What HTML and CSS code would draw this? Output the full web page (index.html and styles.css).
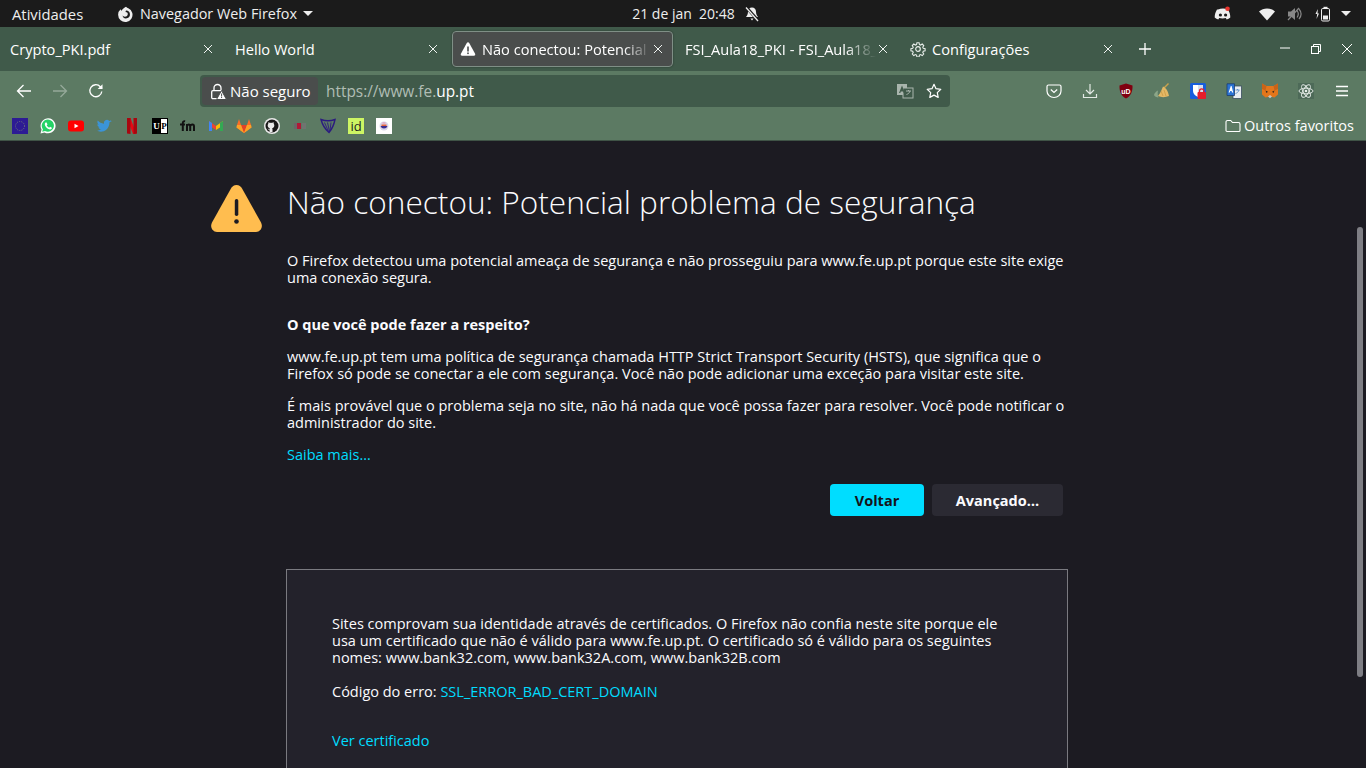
FILE: index.html
```html
<!DOCTYPE html>
<html lang="pt-BR">
<head>
    <meta charset="UTF-8">
    <meta name="viewport" content="width=device-width, initial-scale=1.0">
    <title>Não conectou: Potencial problema de segurança</title>
    <link rel="stylesheet" href="styles.css">
</head>
<body>
    <!-- GNOME top bar -->
    <header class="topbar">
        <div class="topbar-left">
            <span class="activities">Atividades</span>
            <span class="app-menu">
                <svg class="app-logo" width="16" height="16" viewBox="0 0 16 16"><path d="M8 .8c.8.8 1.500 1.200 2.300 1.400A7.200 7.200 0 1 1 2.600 3.300C2.800 4 3 4.500 3.500 4.800 4.500 3 6.200 1.800 8 .8z" fill="#eee"/><path d="M8 4.600a3.900 3.900 0 1 1-3.700 5c.6.700 1.500 1.100 2.500 1.100 1.800 0 3-1.200 3-2.700 0-1.100-.8-1.800-2.300-1.900.1-.6.300-1 .5-1.500z" fill="#1b1b1b"/></svg>
                Navegador Web Firefox
                <i class="caret"></i>
            </span>
        </div>
        <div class="topbar-center">
            <span>21 de jan&nbsp; 20:48</span>
            <svg width="16" height="16" viewBox="0 0 16 16"><path d="M8 1.500c-2.500 0-4 1.800-4 4.200 0 3-1.500 4.500-2 5.300h12c-.5-.8-2-2.300-2-5.300 0-2.400-1.500-4.200-4-4.200zM6.500 12.500h3L8 14.500z" fill="#eee"/><path d="M2.500 1.500L14.500 15" stroke="#1b1b1b" stroke-width="3"/><path d="M2 1.500L14 15" stroke="#eee" stroke-width="1.300"/></svg>
        </div>
        <div class="topbar-right">
            <span class="tray-item discord">
                <svg width="18" height="16" viewBox="0 0 18 16"><path d="M4 3.500c3-1.200 7-1.200 10 0 1.500 2.500 2.300 5 2.300 8-1 1-2.300 1.600-3.600 2l-.9-1.500c-2 .6-4.600.6-6.600 0l-.9 1.500c-1.300-.4-2.600-1-3.600-2 0-3 .8-5.500 2.300-8z" fill="#eee"/><circle cx="6.400" cy="9" r="1.600" fill="#1b1b1b"/><circle cx="11.600" cy="9" r="1.600" fill="#1b1b1b"/><circle cx="13.500" cy="2.800" r="2.300" fill="#e8352e"/></svg>
            </span>
            <span class="tray-item wifi">
                <svg width="16" height="14" viewBox="0 0 16 14"><path d="M0 4.500C4.500.5 11.500.5 16 4.500L8 13.500z" fill="#eee"/></svg>
            </span>
            <span class="tray-item vol">
                <svg width="16" height="16" viewBox="0 0 16 16"><path d="M1 5.500h3L8 2v12L4 10.500H1z" fill="#888"/><path d="M10 4.500c1.500 2 1.500 5 0 7M12 3c2.500 3 2.500 7 0 10" fill="none" stroke="#888" stroke-width="1.200"/><path d="M1 14L12 2" stroke="#888" stroke-width="1.200"/></svg>
            </span>
            <span class="tray-item battery">
                <svg width="16" height="16" viewBox="0 0 16 16"><path d="M2.800 3L.5 8h1.700L1.500 13l2.500-5.500H2.500z" fill="#eee"/><rect x="6.500" y="2.500" width="8" height="12.500" rx="1.300" fill="none" stroke="#eee"/><rect x="8.500" y=".8" width="4" height="1.700" fill="#eee"/><rect x="8" y="9.500" width="5" height="4" fill="#eee"/></svg>
            </span>
            <i class="caret"></i>
        </div>
    </header>

    <!-- tabs -->
    <nav class="tabbar">
        <div class="tab">
            <span class="tab-title">Crypto_PKI.pdf</span>
            <svg class="tab-close" viewBox="0 0 10 10"><path d="M1 1l8 8M9 1L1 9"/></svg>
        </div>
        <div class="tab">
            <span class="tab-title">Hello World</span>
            <svg class="tab-close" viewBox="0 0 10 10"><path d="M1 1l8 8M9 1L1 9"/></svg>
        </div>
        <div class="tab tab-active">
            <svg class="tab-icon" width="16" height="16" viewBox="0 0 16 16"><path d="M8 1.200c-.5 0-.9.300-1.200.8L.9 12.800c-.5 1 .1 2 1.200 2h11.800c1.100 0 1.700-1 1.200-2L9.200 2c-.3-.5-.7-.8-1.200-.8z" fill="#fff"/><rect x="7.200" y="5.500" width="1.600" height="5" fill="#4a4d4c"/><rect x="7.200" y="11.500" width="1.600" height="1.600" fill="#4a4d4c"/></svg>
            <span class="tab-title fade">Não conectou: Potencial p</span>
            <svg class="tab-close" viewBox="0 0 10 10"><path d="M1 1l8 8M9 1L1 9"/></svg>
        </div>
        <div class="tab">
            <span class="tab-title fade">FSI_Aula18_PKI - FSI_Aula18_</span>
            <svg class="tab-close" viewBox="0 0 10 10"><path d="M1 1l8 8M9 1L1 9"/></svg>
        </div>
        <div class="tab">
            <svg class="tab-icon" width="16" height="16" viewBox="0 0 16 16" fill="none" stroke="#e8eeea" stroke-width="1.200"><path d="M6.800 1h2.400l.4 2 1.300.6 1.800-1.100 1.700 1.700-1.100 1.800.6 1.300 2 .4v2.400l-2 .4-.6 1.300 1.100 1.800-1.700 1.700-1.800-1.100-1.300.6-.4 2H6.800l-.4-2-1.300-.6-1.800 1.100-1.700-1.700 1.100-1.800-.6-1.300-2-.4V7.700l2-.4.6-1.300-1.100-1.800 1.700-1.700 1.800 1.100 1.300-.6z" transform="translate(.8 .8) scale(.9)"/><circle cx="8" cy="8" r="2.300"/></svg>
            <span class="tab-title">Configurações</span>
            <svg class="tab-close" viewBox="0 0 10 10"><path d="M1 1l8 8M9 1L1 9"/></svg>
        </div>
        <svg class="new-tab" width="14" height="14" viewBox="0 0 14 14"><path d="M7 1v12M1 7h12" stroke="#fff" stroke-width="1.300"/></svg>
        <div class="win-controls">
            <svg width="12" height="12" viewBox="0 0 12 12"><path d="M1 5h10" stroke="#fff" stroke-width="1"/></svg>
            <svg width="12" height="12" viewBox="0 0 12 12" fill="none" stroke="#fff"><rect x="1.500" y="3.500" width="7" height="7"/><path d="M3.500 3.500v-2h7v7h-2"/></svg>
            <svg width="12" height="12" viewBox="0 0 12 12"><path d="M1 1l10 10M11 1L1 11" stroke="#fff" stroke-width="1"/></svg>
        </div>
    </nav>

    <!-- navigation toolbar -->
    <div class="toolbar">
        <div class="nav-buttons">
            <svg width="16" height="16" viewBox="0 0 16 16" fill="none" stroke="#fff" stroke-width="1.300"><path d="M15 8H1.500M7.500 2L1.500 8l6 6"/></svg>
            <svg class="disabled" width="16" height="16" viewBox="0 0 16 16" fill="none" stroke="#fff" stroke-width="1.300"><path d="M1 8h13.500M8.500 2l6 6-6 6"/></svg>
            <svg width="16" height="16" viewBox="0 0 16 16" fill="none" stroke="#fff" stroke-width="1.300"><path d="M13.800 8.500a6 6 0 1 1-1.500-4.800L14 5.500"/><path d="M14.500 1.200v4.800H9.700z" fill="#fff" stroke="none"/></svg>
        </div>
        <div class="urlbar">
            <div class="identity">
                <svg width="17" height="17" viewBox="0 0 17 17"><path d="M4 8V5a3.500 3.500 0 0 1 7 0v3" fill="none" stroke="#fff" stroke-width="1.300"/><rect x="1.700" y="7.700" width="10" height="8" rx="1.200" fill="none" stroke="#fff" stroke-width="1.300"/><path d="M11.500 7.500l5 9h-10z" fill="#fff" stroke="#4a4d4c"/><rect x="11.100" y="10.500" width="1" height="3" fill="#4a4d4c"/><rect x="11.100" y="14" width="1" height="1" fill="#4a4d4c"/></svg>
                <span>Não seguro</span>
            </div>
            <div class="url"><span class="url-dim">https://www.fe.</span>up.pt</div>
            <svg class="url-icon" width="18" height="16" viewBox="0 0 18 16"><rect x="1" y="1" width="10" height="11" fill="#a9b5ad"/><rect x="7" y="5" width="10" height="10" fill="#405a4a" stroke="#a9b5ad"/><path d="M6 2.500L3 10h1.300l.5-1.500h2.400l.5 1.500H9z" fill="#405a4a"/><path d="M10 8h5M12.500 7v1M14 8c-.5 2-2 3-3.500 3.500" fill="none" stroke="#a9b5ad"/></svg>
            <svg class="url-icon star" width="16" height="16" viewBox="0 0 16 16"><path d="M8 1.300l2 4.400 4.800.6-3.500 3.300.9 4.800L8 12.100l-4.200 2.300.9-4.800L1.200 6.300 6 5.700z" fill="none" stroke="#fff" stroke-width="1.200" stroke-linejoin="round"/></svg>
        </div>
        <div class="addons">
            <svg width="16" height="16" viewBox="0 0 16 16" fill="none" stroke="#fff" stroke-width="1.200"><path d="M2.500 2h11A1.500 1.500 0 0 1 15 3.500V8a7 6.500 0 0 1-14 0V3.500A1.500 1.500 0 0 1 2.500 2z"/><path d="M4.800 6.500L8 9.500l3.200-3"/></svg>
            <svg width="16" height="16" viewBox="0 0 16 16" fill="none" stroke="#e3eae5" stroke-width="1.200"><path d="M8 1v10M4 7l4 4 4-4M1.500 11v3.500h13V11"/></svg>
            <svg width="16" height="16" viewBox="0 0 16 16"><path d="M8 .5l6.500 2c.2 6-1.500 10.500-6.500 13-5-2.500-6.700-7-6.500-13z" fill="#800010"/><text x="8" y="10.500" class="ublock-text">uD</text></svg>
            <svg width="16" height="16" viewBox="0 0 16 16"><path d="M14.500 .5L10 5" stroke="#c9a24d" stroke-width="1.400"/><path d="M9 3.500c2.500 1 5 4 6 9.500-3.500 1.500-8 1.500-11 0C6.500 10 7.500 7 9 3.500z" fill="#e3b866"/><path d="M7 8l2 5M10 7l2 6" stroke="#c9973f" stroke-width=".7"/><path d="M0 12c.5-2 2-3.500 4-4.500-.5 2-.5 4.500.5 7-2 0-4-1-4.500-2.500z" fill="#8ba688"/></svg>
            <svg width="16" height="16" viewBox="0 0 16 16"><rect width="16" height="16" rx="1.500" fill="#175ddc"/><path d="M3 2h10v6c0 3-2.500 5-5 6-2.500-1-5-3-5-6z" fill="#fff"/><path d="M8 2h5v6c0 3-2.500 5-5 6z" fill="#d5dfee"/><rect x="7.500" y="9" width="8.500" height="7" rx="1" fill="#e61e2b"/><path d="M9.500 9.500V8a2.200 2.200 0 0 1 4.400 0v1.500" fill="none" stroke="#e61e2b" stroke-width="1.300"/></svg>
            <svg width="16" height="16" viewBox="0 0 16 16"><rect x="7" y="3" width="8.500" height="12.500" fill="#e8edf2" stroke="#3a4e5f" stroke-width=".8"/><path d="M1 .8h7.500v11.700H1z" fill="#2b73d4" stroke="#1c3c70" stroke-width=".8"/><path d="M4.800 3L2.600 9.500h1.200l.4-1.400h1.400l.4 1.400h1.200L5.600 3z" fill="#fff"/><path d="M9.500 7h4M11.500 6v1M13 7c-.5 2-2 3-3.500 3.500" fill="none" stroke="#5d8dc8" stroke-width=".9"/></svg>
            <svg width="16" height="16" viewBox="0 0 16 16"><path d="M0 .5L4.500 3h7L16 .5v11l-3.500 3-2.500-.5H6l-2.500.5L0 11.500z" fill="#e2761b"/><path d="M6 13.500l2 1.800 2-1.800-2-1.500z" fill="#c9c4be"/><path d="M3.500 7.500l2.500 1.200-1.500 1.200zM12.500 7.500L10 8.700l1.500 1.200z" fill="#33281f"/><path d="M0 .5L4.500 3 3.500 7.500 0 6zM16 .5L11.500 3l1 4.500L16 6z" fill="#c86318"/></svg>
            <svg width="16" height="16" viewBox="0 0 16 16" fill="none" stroke="#e8eeea" stroke-width=".9"><rect x="0" y="0" width="16" height="16" fill="#4d6a58" stroke="none"/><ellipse cx="8" cy="8" rx="7" ry="2.800"/><ellipse cx="8" cy="8" rx="7" ry="2.800" transform="rotate(60 8 8)"/><ellipse cx="8" cy="8" rx="7" ry="2.800" transform="rotate(120 8 8)"/><circle cx="8" cy="8" r="1.300" fill="#e8eeea" stroke="none"/></svg>
            <svg width="16" height="16" viewBox="0 0 16 16" stroke="#fff" stroke-width="1.300"><path d="M2 3.500h12M2 8h12M2 12.500h12"/></svg>
        </div>
    </div>

    <!-- bookmarks -->
    <div class="bookmarks">
        <div class="bookmark-list">
            <svg width="16" height="16" viewBox="0 0 16 16"><rect width="16" height="16" fill="#2d1b94"/><circle cx="8" cy="8" r="4.500" fill="none" stroke="#7f8e6e" stroke-width=".8" stroke-dasharray="1 1.200"/></svg>
            <svg width="16" height="16" viewBox="0 0 16 16"><path d="M.5 15.500l1.100-3.900A7.500 7.500 0 1 1 4.500 14.400z" fill="#fff"/><path d="M2.200 13.800l.7-2.500A6.100 6.100 0 1 1 5 13.100z" fill="#25d366"/><path d="M5.500 4.500c-1 1-1 2.500.3 4.200 1.300 1.700 3 2.800 4.300 2.800 1 0 1.800-.7 1.800-1.700l-1.900-1-.8.900c-1-.4-2-1.400-2.500-2.500l.8-.8-.9-1.900z" fill="#fff"/></svg>
            <svg width="16" height="16" viewBox="0 0 16 16"><rect y="2.500" width="16" height="11" rx="3" fill="#f00"/><path d="M6.500 5.800L10.500 8l-4 2.200z" fill="#fff"/></svg>
            <svg width="16" height="16" viewBox="0 0 16 16"><path d="M15.500 3.400c-.5.200-1 .4-1.700.5.600-.4 1-1 1.300-1.700-.6.400-1.200.6-1.900.8a3 3 0 0 0-5.200 2.800C5.500 5.600 3.300 4.400 1.800 2.600c-.8 1.400-.4 3.100.9 4-.5 0-1-.2-1.400-.4 0 1.500 1 2.700 2.400 3-.4.100-.9.100-1.300 0 .4 1.200 1.500 2 2.800 2.100-1.300 1-2.900 1.500-4.500 1.300 4.100 2.500 12.300 1.200 12.900-8.600.7-.5 1.300-1.100 1.400-1.600z" fill="#3b94d9"/></svg>
            <svg width="16" height="16" viewBox="0 0 16 16"><path d="M3 0h3.500l6 16H9z" fill="#e50914"/><path d="M3 0h3.500v16L3 15.500zM9.500 0H13v15.500L9.500 16z" fill="#a80710"/></svg>
            <svg width="16" height="16" viewBox="0 0 16 16"><rect width="16" height="16" fill="#000"/><rect x="9" y="1" width="6" height="14" fill="#fff"/><text x="4.500" y="11" class="bm-serif bm-light">U</text><text x="12" y="11" class="bm-serif">P</text></svg>
            <svg width="16" height="16" viewBox="0 0 16 16" fill="none" stroke="#111" stroke-width="2"><path d="M0 6.500h5M2.800 13V5c0-1.500 1-2 2.300-1.700M7 13V6M7 8c1-2 3.200-2 3.200.5V13M10.200 8c1-2 3.800-2 3.800.5V13"/></svg>
            <svg width="16" height="16" viewBox="0 0 16 16"><path d="M1 3l7 5v4L1 7.500z" fill="#ea4335"/><path d="M15 3L8 8v4l7-4.500z" fill="#fbbc04"/><path d="M1 3v10h3V5z" fill="#4285f4"/><path d="M15 3v10h-3V5z" fill="#34a853"/></svg>
            <svg width="16" height="16" viewBox="0 0 16 16"><path d="M8 15L.5 9.500 1 7l2-6 2 6h6l2-6 2 6 .5 2.500z" fill="#fc6d26"/><path d="M8 15L5 7h6z" fill="#e24329"/><path d="M8 15L.5 9.500 1 7h4zM8 15l7.500-5.500L15 7h-4z" fill="#fca326"/></svg>
            <svg width="16" height="16" viewBox="0 0 16 16"><circle cx="8" cy="8" r="8" fill="#e9e9e9"/><circle cx="8" cy="8" r="6.500" fill="#181717"/><path d="M5.500 14v-2c-1.200 0-1.600-.8-1.900-1.500.6 0 1 .4 1.500.9l.5-.2c0-.3.200-.6.400-.8C4.500 10 3.700 9 3.700 7.500c0-.7.200-1.200.6-1.700-.1-.4-.1-1 .1-1.500.6 0 1.200.3 1.600.6.600-.2 1.400-.2 2 0 .4-.3 1-.6 1.600-.6.200.5.200 1.100.1 1.500.4.500.6 1 .6 1.700 0 1.500-.8 2.500-2.300 2.900.3.300.5.700.5 1.100V14z" fill="#e9e9e9"/></svg>
            <svg width="16" height="16" viewBox="0 0 16 16"><rect x="2" y="5" width="3" height="6" fill="#6a6468"/><rect x="5" y="5" width="4" height="6" fill="#b01835"/><rect x="10" y="5" width="4" height="6" fill="#6f7470"/></svg>
            <svg width="16" height="16" viewBox="0 0 16 16" fill="none" stroke="#2b1a80" stroke-width="1.400"><path d="M1 1.500c4 1.500 10 1.500 14 0-1 5-3 9.500-6 13C6 12 2.500 7 1 1.500z"/><path d="M4.500 4.500l4 9M7.500 4.500l2 9M11 4.500l-1 8" stroke-width=".9"/></svg>
            <svg width="16" height="16" viewBox="0 0 16 16"><rect width="16" height="16" fill="#cdf564"/><text x="8" y="12.500" class="bm-id">id</text></svg>
            <svg width="16" height="16" viewBox="0 0 16 16"><rect width="16" height="16" fill="#fff"/><circle cx="8" cy="8" r="4.500" fill="#d8d5e8"/><path d="M4.500 8h7a3.700 3.700 0 0 1-7 0z" fill="#3a2c90"/><path d="M5.500 6.500h5v1.500h-5z" fill="#e8663d"/><path d="M6.500 4.500h3v1h-3z" fill="#e98fb0"/></svg>
        </div>
        <div class="other-bookmarks">
            <svg width="16" height="16" viewBox="0 0 16 16" fill="none" stroke="#fff" stroke-width="1.100"><path d="M1 4a1.500 1.500 0 0 1 1.500-1.500h3.200L7.500 4.500h6A1.500 1.500 0 0 1 15 6v6.500a1 1 0 0 1-1 1H2a1 1 0 0 1-1-1z"/></svg>
            <span>Outros favoritos</span>
        </div>
    </div>

    <!-- error page -->
    <main class="page">
        <svg class="warn-icon" width="51" height="47" viewBox="0 0 51 47"><path d="M25.500 0c-2.600 0-4.400 1.400-5.700 3.700L1 37.500C-1.300 41.800 1.300 47 6 47h39c4.700 0 7.300-5.200 5-9.500L31.200 3.700C29.900 1.400 28.100 0 25.500 0z" fill="#ffbd4f"/><rect x="23.800" y="14" width="3.500" height="17" rx="1.700" fill="#1c1b22"/><circle cx="25.500" cy="36.500" r="2.300" fill="#1c1b22"/></svg>
        <div class="page-column">
            <h1>Não conectou: Potencial problema de segurança</h1>
            <p class="intro">O Firefox detectou uma potencial ameaça de segurança e não prosseguiu para www.fe.up.pt porque este site exige<br>uma conexão segura.</p>
            <h2>O que você pode fazer a respeito?</h2>
            <p>www.fe.up.pt tem uma política de segurança chamada HTTP Strict Transport Security (HSTS), que significa que o<br>Firefox só pode se conectar a ele com segurança. Você não pode adicionar uma exceção para visitar este site.</p>
            <p>É mais provável que o problema seja no site, não há nada que você possa fazer para resolver. Você pode notificar o<br>administrador do site.</p>
            <p><a href="#">Saiba mais…</a></p>
            <div class="actions">
                <button class="btn-primary">Voltar</button>
                <button class="btn-secondary">Avançado…</button>
            </div>
            <section class="advanced">
                <p>Sites comprovam sua identidade através de certificados. O Firefox não confia neste site porque ele<br>usa um certificado que não é válido para www.fe.up.pt. O certificado só é válido para os seguintes<br>nomes: www.bank32.com, www.bank32A.com, www.bank32B.com</p>
                <p class="err-code">Código do erro: <a href="#">SSL_ERROR_BAD_CERT_DOMAIN</a></p>
                <p class="view-cert"><a href="#">Ver certificado</a></p>
            </section>
        </div>
        <div class="scroll-thumb"></div>
    </main>
</body>
</html>
```

FILE: styles.css
```css
* {
    box-sizing: border-box;
}
html, body {
    height: 100%;
}
body {
    margin: 0;
    display: flex;
    flex-direction: column;
    height: 768px;
    overflow: hidden;
    font-family: "Open Sans", "Noto Sans", sans-serif;
    font-size: 14.500px;
    color: #fbfbfe;
    background: #1c1b22;
}
svg {
    display: block;
    flex: none;
}

/* top bar */
.topbar {
    height: 27px;
    flex: none;
    display: grid;
    grid-template-columns: 1fr auto 1fr;
    align-items: center;
    background: #1b1b1b;
    color: #eee;
    font-size: 14.400px;
}
.topbar-left {
    display: flex;
    align-items: center;
    padding-left: 12px;
}
.activities {
    width: 106px;
    font-size: 14.800px;
}
.app-menu {
    display: flex;
    align-items: center;
    gap: 6px;
}
.caret {
    display: block;
    width: 0;
    height: 0;
    border-left: 5px solid transparent;
    border-right: 5px solid transparent;
    border-top: 5px solid #eee;
}
.topbar-center {
    display: flex;
    align-items: center;
    gap: 9px;
    margin-left: 26px;
    font-size: 14px;
}
.topbar-right {
    display: flex;
    align-items: center;
    justify-content: flex-end;
    padding-right: 15px;
}
.tray-item {
    display: block;
    margin-right: 12px;
}
.discord { margin-right: 27px; }
.wifi { margin-right: 12px; }
.vol { margin-right: 12px; }
.battery { margin-right: 10px; }

/* tabs */
.tabbar {
    height: 44px;
    flex: none;
    display: flex;
    align-items: center;
    background: #405a4a;
}
.tab {
    width: 221px;
    height: 36px;
    margin: 0 2px;
    padding: 0 7px;
    display: flex;
    align-items: center;
    gap: 6px;
    border: 1px solid transparent;
    border-radius: 4px;
    font-size: 14.600px;
}
.tab-title {
    flex: 1;
    min-width: 0;
    white-space: nowrap;
    overflow: hidden;
    color: #fff;
}
.tab-title.fade {
    -webkit-mask-image: linear-gradient(to right, #000 84%, transparent 100%);
    mask-image: linear-gradient(to right, #000 84%, transparent 100%);
}
.tab-active {
    background: #4a4d4c;
    border-color: #7f8f86;
    box-shadow: 0 0 2px rgba(0,0,0,0.4);
}
.tab-close {
    width: 10px;
    height: 10px;
    flex: none;
    margin: 0 2px 0 -4px;
    fill: none;
    stroke: #f0f4f1;
    stroke-width: 1;
}
.new-tab {
    margin-left: 13px;
}
.win-controls {
    margin-left: auto;
    padding-right: 13px;
    display: flex;
    gap: 19px;
}

/* toolbar */
.toolbar {
    height: 40px;
    flex: none;
    display: flex;
    align-items: center;
    background: #5c7a63;
}
.nav-buttons {
    width: 200px;
    padding-left: 16px;
    display: flex;
    gap: 20px;
}
.disabled {
    opacity: 0.35;
}
.urlbar {
    width: 750px;
    height: 32px;
    padding: 0 8px 0 2px;
    display: flex;
    align-items: center;
    background: #405a4a;
    border-radius: 4px;
}
.identity {
    width: 116px;
    height: 28px;
    padding-left: 8px;
    display: flex;
    align-items: center;
    gap: 3px;
    background: #4a4d4c;
    border-radius: 4px;
    font-size: 15px;
    color: #fff;
}
.url {
    flex: 1;
    padding-left: 8px;
    font-size: 15.400px;
    color: #fff;
}
.url-dim {
    color: #b0bdb4;
}
.star {
    margin-left: 12px;
}
.addons {
    flex: 1;
    padding-left: 96px;
    display: flex;
    gap: 20px;
}
.ublock-text {
    font: bold 7px "Liberation Sans", sans-serif;
    fill: #fff;
    text-anchor: middle;
}

/* bookmarks */
.bookmarks {
    height: 30px;
    flex: none;
    padding: 0 12px;
    display: flex;
    align-items: center;
    justify-content: space-between;
    background: #5c7a63;
    border-bottom: 1px solid #3f5346;
}
.bookmark-list {
    display: flex;
    gap: 12px;
}
.bm-serif {
    font: bold 9px "Liberation Serif", serif;
    fill: #000;
    text-anchor: middle;
}
.bm-light {
    fill: #fff;
}
.bm-id {
    font: 13px "Open Sans", sans-serif;
    fill: #222;
    text-anchor: middle;
}
.other-bookmarks {
    display: flex;
    align-items: center;
    gap: 3px;
    font-size: 14.500px;
    color: #fff;
}

/* error page */
.page {
    flex: 1;
    min-height: 0;
    position: relative;
    overflow: hidden;
    padding: 44px 0 0 211px;
    display: flex;
    gap: 25px;
    font-size: 14.500px;
    line-height: 17px;
}
.page-column {
    width: 781px;
}
h1 {
    margin: -2px 0 0;
    font-size: 31.600px;
    font-weight: 300;
    line-height: 38px;
    color: #fbfbfe;
}
p {
    margin: 0 0 15px;
}
.intro {
    margin-top: 31px;
    margin-bottom: 30px;
}
h2 {
    margin: 0 0 15px;
    font-size: 14.500px;
    font-weight: 700;
    line-height: 17px;
}
a {
    color: #00ddff;
    text-decoration: none;
}
.actions {
    margin-top: 21px;
    padding-right: 5px;
    display: flex;
    justify-content: flex-end;
    gap: 8px;
}
button {
    height: 32px;
    border: none;
    border-radius: 4px;
    font-family: inherit;
    font-size: 14.500px;
    font-weight: 700;
}
.btn-primary {
    width: 94px;
    background: #00ddff;
    color: #15141a;
}
.btn-secondary {
    width: 131px;
    background: #2b2a33;
    color: #fbfbfe;
}
.advanced {
    height: 300px;
    margin: 53px 0 0 -1px;
    padding: 45px 45px;
    background: #23222b;
    border: 1px solid #7a7a80;
}
.err-code {
    margin-top: 17px;
    margin-bottom: 32px;
}
.scroll-thumb {
    position: absolute;
    top: 86px;
    right: 3px;
    width: 6px;
    height: 450px;
    border-radius: 3px;
    background: #7e7e84;
}
```
